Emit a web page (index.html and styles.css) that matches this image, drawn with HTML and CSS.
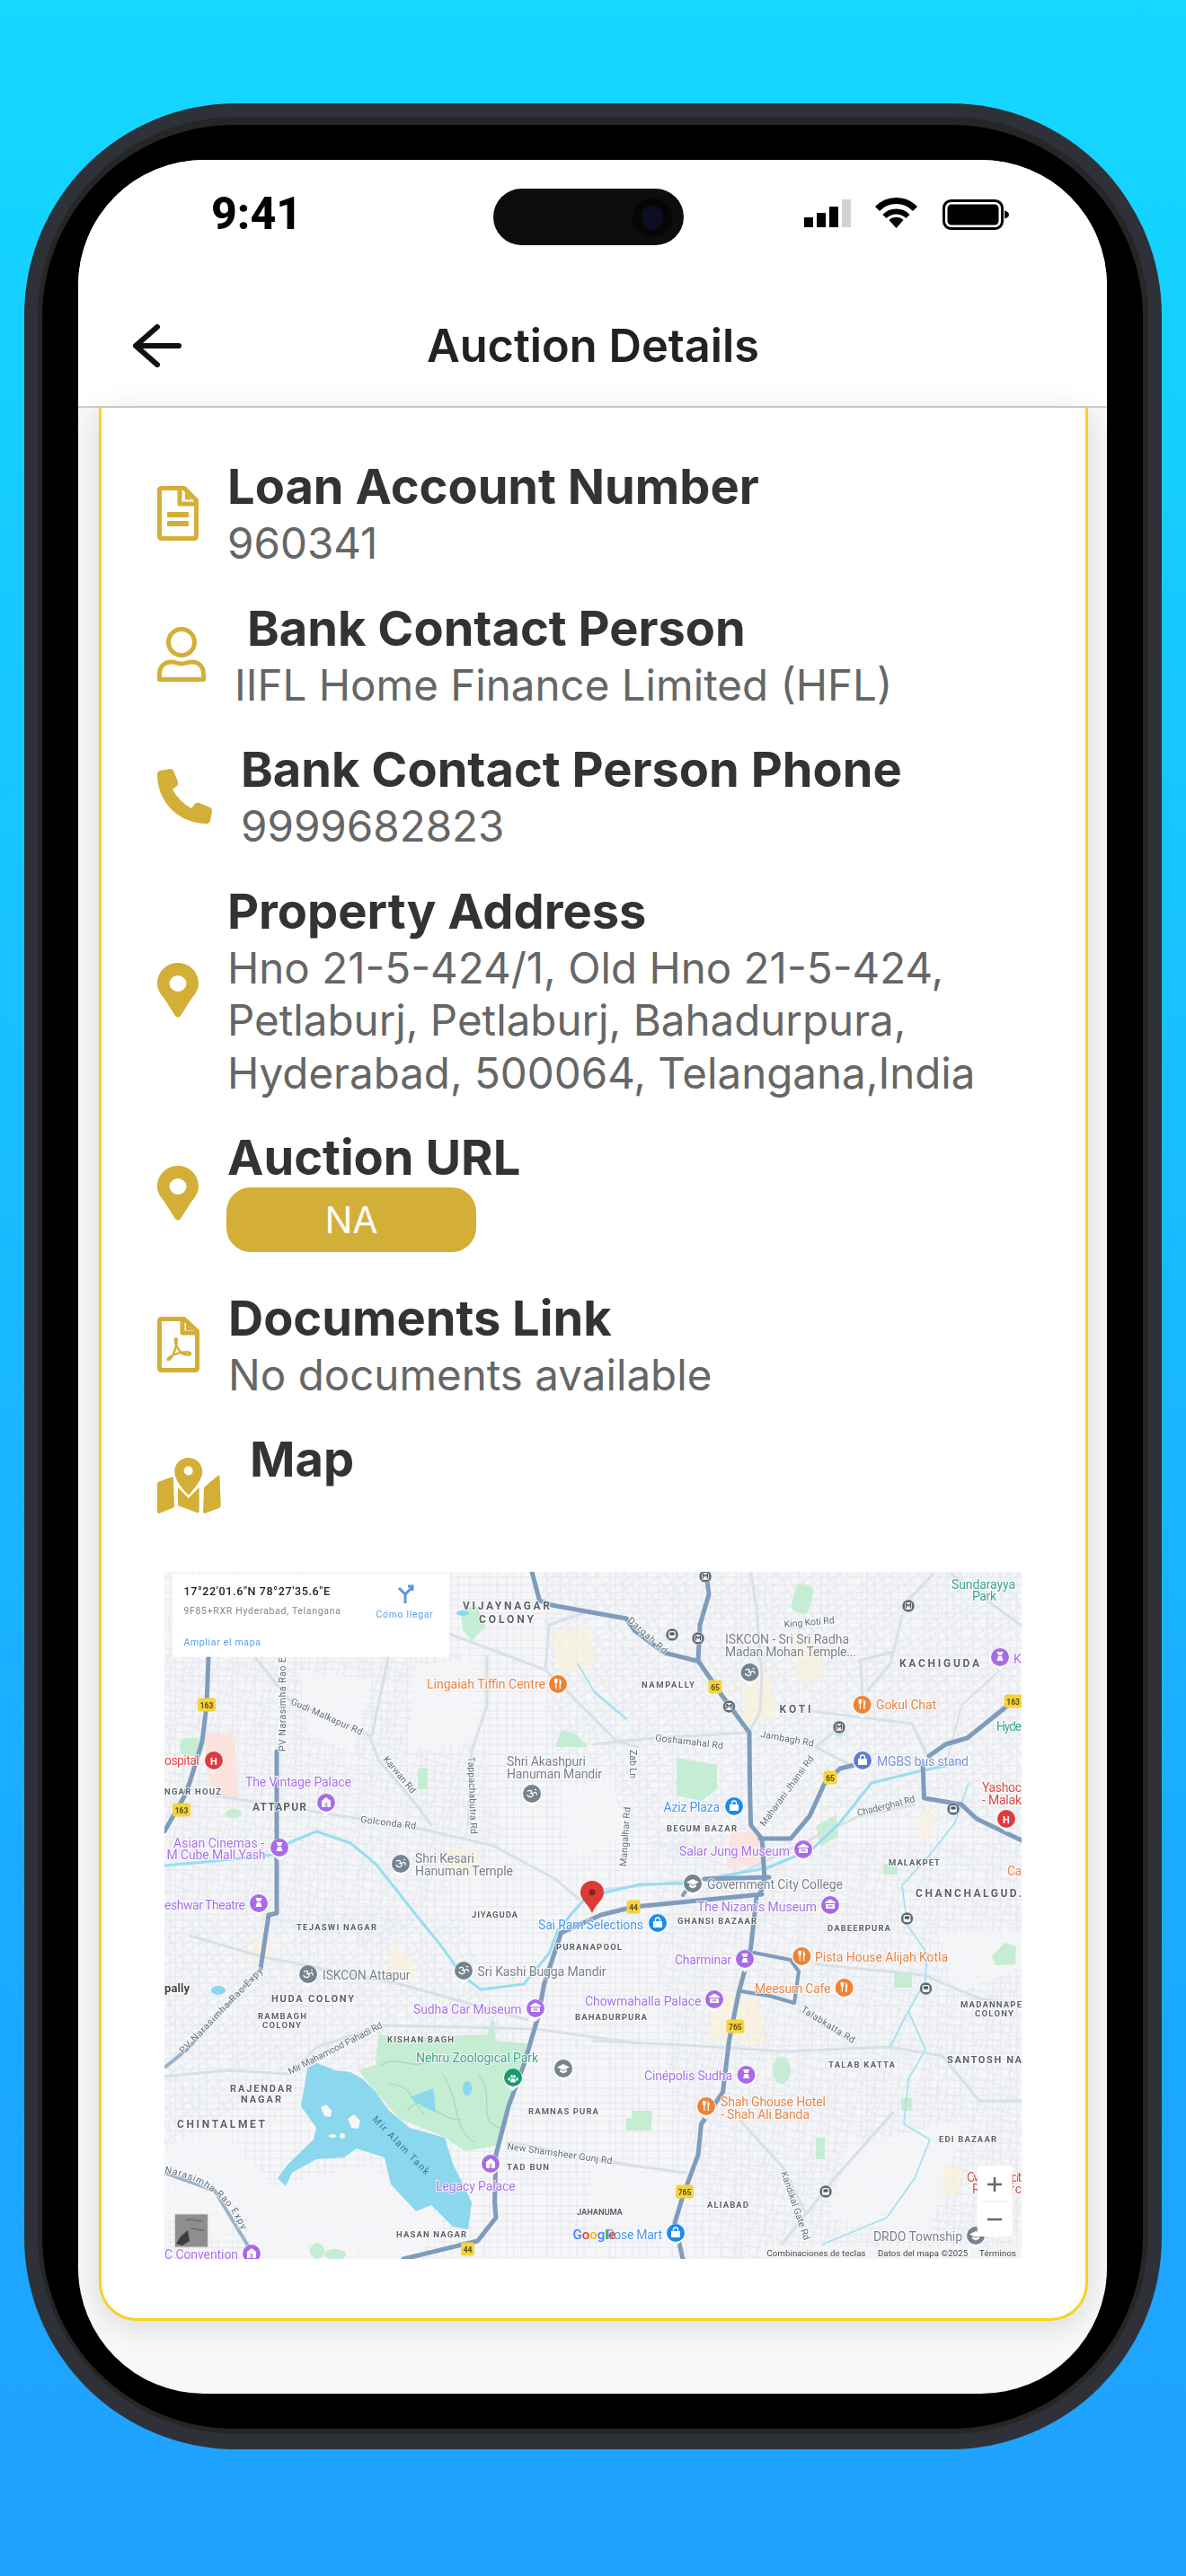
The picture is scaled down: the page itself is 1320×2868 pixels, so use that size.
FILE: index.html
```html
<!DOCTYPE html>
<html lang="en">
<head>
<meta charset="utf-8">
<title>Auction Details</title>
<link rel="stylesheet" href="styles.css">
</head>
<body>
<div class="phone">
  <div class="ring">
    <div class="bezel">
      <div class="screen">
        <div class="status">
          <span class="time">9:41</span>
          <div class="island"><span class="cam"><span class="lens"></span></span></div>
          <div class="status-icons">
            <div class="signal"><i class="b1"></i><i class="b2"></i><i class="b3"></i><i class="b4"></i></div>
            <svg class="wifi" width="49" height="34" viewBox="0 0 49 34"><path class="wifi-arc a1" d="M3.5 12.5A29 29 0 0 1 45.5 12.5"/><path class="wifi-arc a2" d="M11.5 21A18 18 0 0 1 37.5 21"/><path class="wifi-dot" d="M24.5 34L16.5 25A11.5 11.5 0 0 1 32.5 25Z"/></svg>
            <svg class="battery" width="74" height="34" viewBox="0 0 74 34"><rect class="bat-out" x="1.5" y="1.5" width="65" height="31" rx="8"/><rect class="bat-in" x="5.5" y="5.5" width="57" height="23" rx="4.5"/><path class="bat-in" d="M69 12.5C72 13 74 15 74 17S72 21 69 21.500Z"/></svg>
          </div>
        </div>
        <header class="header">
          <svg class="back" width="54" height="48" viewBox="0 0 54 48"><path d="M27 3L3 24L27 45M3 24H51"/></svg>
          <h1 class="title">Auction Details</h1>
          <span></span>
        </header>
        <main class="card">
          <div class="row">
            <svg class="icon" width="46" height="61" viewBox="0 0 46 61"><path class="ln" d="M2.500 5Q2.500 2.500 5 2.500H30L43.500 16V56Q43.500 58.500 41 58.500H5Q2.500 58.500 2.500 56Z"/><path class="ln" d="M25 2.500V20H43.500"/><path class="fl" d="M31 7L39 15.500H31Z"/><rect class="fl" x="11" y="29" width="24" height="6" rx="1"/><rect class="fl" x="11" y="39" width="24" height="6" rx="1"/></svg>
            <div class="text"><h2 class="label">Loan Account Number</h2><p class="value">960341</p></div>
          </div>
          <div class="row">
            <svg class="icon" width="54" height="61" viewBox="0 0 54 61"><circle class="ln" cx="27" cy="17" r="14.500"/><path class="ln" d="M2.500 58.500H51.500V53C51.500 44 46 39 38 39C33 39 32 41 27 41C22 41 21 39 16 39C8 39 2.500 44 2.500 53Z"/></svg>
            <div class="text"><h2 class="label shift">Bank Contact Person</h2><p class="value">IIFL Home Finance Limited (HFL)</p></div>
          </div>
          <div class="row">
            <svg class="icon" width="61" height="61" viewBox="0 0 61 61"><path class="fl" d="M0 6Q0 3 3 2L14 0Q17 0 18 2L23 14Q24 17 22 19L17 23Q24 36 38 44L42 39Q44 37 47 38L59 43Q61 44 61 47L59 58Q58 61 55 61C24 61 0 37 0 6Z"/></svg>
            <div class="text"><h2 class="label">Bank Contact Person Phone</h2><p class="value">9999682823</p></div>
          </div>
          <div class="row">
            <svg class="icon" width="46" height="61" viewBox="0 0 46 61"><path class="fl hole" d="M23 0C36 0 46 10 46 23C46 30 42 35 38 40L26 59Q23 62 20 59L8 40C4 35 0 30 0 23C0 10 10 0 23 0ZM23 14A9.500 9 0 1 0 23 32A9.500 9 0 1 0 23 14Z"/></svg>
            <div class="text"><h2 class="label">Property Address</h2><p class="value">Hno 21-5-424/1, Old Hno 21-5-424, Petlaburj, Petlaburj, Bahadurpura, Hyderabad, 500064, Telangana,India</p></div>
          </div>
          <div class="row row-url">
            <svg class="icon" width="46" height="61" viewBox="0 0 46 61"><path class="fl hole" d="M23 0C36 0 46 10 46 23C46 30 42 35 38 40L26 59Q23 62 20 59L8 40C4 35 0 30 0 23C0 10 10 0 23 0ZM23 14A9.500 9 0 1 0 23 32A9.500 9 0 1 0 23 14Z"/></svg>
            <div class="text"><h2 class="label">Auction URL</h2><div class="pill">NA</div></div>
          </div>
          <div class="row">
            <svg class="icon" width="47" height="62" viewBox="0 0 47 62"><path class="ln" d="M2.500 5Q2.500 2.500 5 2.500H30L44.500 16V57Q44.500 59.500 42 59.500H5Q2.500 59.500 2.500 57Z"/><path class="ln" d="M28 2.500V18H44.500"/><path class="fl" d="M32 7L40 15H32Z"/><path class="thin" d="M12 48C16 48 20 38 21.500 30C22.500 24 21 23 20 25C19 29 23 37 28 41C31 42 37 44 37 41C37 38 25 39 17 43C13 45 11 47 12 48Z"/></svg>
            <div class="text"><h2 class="label">Documents Link</h2><p class="value">No documents available</p></div>
          </div>
          <div class="row row-map">
            <svg class="icon" width="71" height="62" viewBox="0 0 71 62"><path class="fl" d="M1 27L16 21.500Q18 21 18 23L19 54Q19 55 17 56L2 62Q0 62 0 60V29Q0 28 1 27ZM23 33L34.700 45L46.700 33V60Q46.700 62 44 61L25 54Q23 53.500 23 52ZM52 33L68 19.500Q69.500 19 69.500 21L70.700 53Q70.700 55 69 56L53 62Q51 62 51 60Z"/><path class="fl hole" d="M34.700 0C43.500 0 50.200 7 50.200 15.500C50.200 24 42 34 34.700 41.700C27.400 34 19.200 24 19.200 15.500C19.200 7 26 0 34.700 0ZM34.700 9.500A5 5 0 1 0 34.700 19.500A5 5 0 1 0 34.700 9.500Z"/></svg>
            <div class="text"><h2 class="label">Map</h2><p class="value">&nbsp;</p></div>
          </div>
          <svg class="map" width="954" height="765" viewBox="0 0 954 765" role="img" aria-label="Map of Hyderabad">
            <defs>
              <pattern id="s1" width="70" height="70" patternUnits="userSpaceOnUse"><path class="grid" d="M0 6H70M0 15H70M0 23H70M0 31H70M0 38H70M0 46H70M0 52H70M0 63H70M6 0V70M12 0V70M21 0V70M31 0V70M39 0V70M47 0V70M60 0V70M20 9V23M38 23V38M53 38V52M5 52V63"/></pattern>
              <pattern id="s2" width="46" height="46" patternUnits="userSpaceOnUse" patternTransform="rotate(18)"><path class="grid" d="M0 7H46M0 16H46M0 26H46M0 36H46M9 0V46M15 0V46M20 0V46M33 0V46M41 0V46"/></pattern>
              <pattern id="s3" width="38" height="38" patternUnits="userSpaceOnUse" patternTransform="rotate(-32)"><path class="grid" d="M0 6H38M0 13H38M0 21H38M0 30H38M7 0V38M16 0V38M27 0V38"/></pattern>
              <g id="pinbase"><path class="pin-w" d="M-11 0A11 11 0 0 1 11 0C11 7 4 9 0 14C-4 9 -11 7 -11 0Z"/><circle class="pin-c" cy="-1" r="10"/></g>
              <g id="food"><path class="gl" d="M-4 -6V-3Q-4 -1 -2.800 -1V5H-1.600V-1Q-.4 -1 -.4 -3V-6ZM1.500 -6Q4.500 -4 3.500 0H3V5H1.500Z"/></g>
              <g id="museum"><path class="gl" d="M0 -6.500L6 -3V-2H-6V-3ZM-5 -1H5V4H-5Z"/><rect class="gl-i" x="-2.500" y="0" width="5" height="2.500"/></g>
              <g id="cinema"><path class="gl" d="M-3.500 -6H3.500L2 -2H-2ZM-2 -1H2L3.500 4H-3.500Z"/></g>
              <g id="house"><path class="gl" d="M0 -6L5 -2V5H-5V-2Z"/><rect class="gl-i" x="-1.500" y="0" width="3" height="5"/></g>
              <g id="om"><path class="gl-s" d="M-5 -2.500C-2 -5 1 -3 -1 -.5C2 -1 2 4 -2 3.500C-4 3.200 -5 2 -5 1M1 0C3 -3 6 -1 5 1.500M3 -5L5 -4"/></g>
              <g id="cap"><path class="gl" d="M0 -5L7 -1.500L0 2L-7 -1.500ZM-4 1L0 3L4 1V3.500L0 5.500L-4 3.500Z"/></g>
              <g id="bag"><path class="gl" d="M-5 -2H5V5H-5Z"/><path class="gl-s" d="M-2.500 -2V-3.500A2.500 2.500 0 0 1 2.500 -3.500V-2"/></g>
              <g id="metro"><circle class="m-o" r="7"/><rect class="m-i" x="-4" y="-4" width="8" height="8" rx="2"/><path class="m-d" d="M-2.500 2.500V-2.500L0 0L2.500 -2.500V2.500"/></g>
              <g id="rail"><circle class="m-o" r="7"/><rect class="m-i" x="-4" y="-4" width="8" height="8" rx="2"/><rect class="m-d2" x="-2.500" y="-2.500" width="5" height="3"/></g>
            </defs>

            <rect class="land" width="954" height="765"/>
            <rect width="954" height="765" fill="url(#s1)"/>
            <path fill="url(#s2)" d="M0 90H330L380 300L240 420L0 360Z"/>
            <path fill="url(#s3)" d="M420 0H954V300L760 260L560 320L430 200Z"/>
            <path fill="url(#s2)" d="M540 300H954V765H620L560 560Z"/>
            <path fill="url(#s3)" d="M0 380H330L380 520L130 570L0 640Z"/>
            <path class="open" d="M90 690L230 660L310 720L280 765H100Z"/>
            <path class="open" d="M760 640L890 610L850 740L740 720Z"/>
            <path class="open" d="M480 650L590 680L560 750L470 720Z"/>
            <path class="open" d="M440 240L500 230L510 300L450 320Z"/>
            <path class="open" d="M280 105L340 95L350 190L270 200Z"/>
            <path class="open" d="M860 400H954V440L880 470Z"/>
            <path class="open" d="M0 640L60 620L130 690L60 740L0 720Z"/>
            <path class="open" d="M150 110L230 120L210 200L160 180Z"/>

            <path class="beige" d="M430 68L470 60L480 105L440 115Z"/>
            <path class="beige" d="M700 70L725 75L735 115L705 125Z"/>
            <path class="beige" d="M645 115L675 115L680 165L645 170Z"/>
            <path class="beige" d="M610 470L660 475L670 525L605 520Z"/>
            <path class="beige" d="M255 415L275 430L280 455L245 450Z"/>
            <path class="beige" d="M100 410L122 412L118 435L95 432Z"/>
            <path class="beige" d="M318 305L350 312L345 340L310 332Z"/>
            <path class="beige" d="M840 265L858 268L853 298L838 293Z"/>
            <path class="beige" d="M868 660L888 663L884 695L864 692Z"/>
            <path class="pink" d="M44 185Q44 180 50 180H78L82 252H52Z"/>
            <path class="pink" d="M630 290L660 290L665 325L625 330Z"/>

            <path class="park" d="M570 207L615 215V242L597.500 255L570 249Z"/>
            <path class="park" d="M216 555L235 549L238 515L273 519L359 515L366 495L369 522L404 525L388 582L369 639L335 645L311 629L262 609L235 579Z"/>
            <path class="zoo" d="M240 550C260 535 280 560 300 540M300 540C320 555 350 540 380 545M270 600C290 575 300 610 330 610M310 560C330 590 320 620 345 635M350 560C370 590 345 610 375 620M250 570C275 570 275 590 290 605"/>
            <path class="park" d="M435 195L442 176L457 180L472 195Z"/>
            <path class="park" d="M282 219H293V242H282Z"/>
            <path class="park" d="M330 43L347 37L358 60L342 77L332 65Z"/>
            <path class="park" d="M921 428L935 413L948 417L947 437L925 438Z"/>
            <path class="park" d="M725 283L748 270L750 295L730 305Z"/>
            <ellipse class="park" cx="687" cy="555" rx="10" ry="15"/>
            <ellipse class="park" cx="751" cy="176" rx="6" ry="8"/>
            <ellipse class="park" cx="77" cy="269" rx="9" ry="5"/>
            <ellipse class="park" cx="170" cy="756" rx="8" ry="9"/>
            <ellipse class="park" cx="190" cy="760" rx="12" ry="6"/>
            <rect class="park" x="17" y="185" width="26" height="20" rx="8"/>
            <rect class="park" x="514" y="608" width="11" height="14"/>
            <rect class="park" x="800" y="325" width="16" height="12"/>
            <rect class="park" x="812" y="445" width="20" height="18"/>
            <rect class="park" x="820" y="586" width="12" height="14"/>
            <rect class="park" x="725" y="630" width="10" height="24"/>
            <rect class="park" x="520" y="600" width="22" height="22"/>
            <rect class="park" x="700" y="14" width="20" height="32" rx="6" transform="rotate(15 710 30)"/>

            <path class="water" d="M159 552L170 547L190 555L207 557L221 565L235 579L249 599L273 619L312 630L321 659L342 702L338 732L321 729L297 705L280 712L252 682L245 652L214 642L200 652L169 654L142 669L135 684L126 675L138 659L166 632L169 619L152 595L156 572Z"/>
            <path class="land" d="M174 596L180 593L186 600L185 607L178 606Z"/>
            <path class="land" d="M204 609L211 604L218 611L216 620L208 619Z"/>
            <ellipse class="land" cx="187" cy="628" rx="4" ry="2"/>
            <ellipse class="land" cx="198" cy="628" rx="3" ry="3"/>
            <path class="water" d="M273 585L299 575L302 602L287 595Z"/>
            <ellipse class="water" cx="337" cy="575" rx="5" ry="8"/>
            <ellipse class="water" cx="60" cy="466" rx="8" ry="5"/>
            <ellipse class="water" cx="332" cy="46" rx="7" ry="3"/>

            <path class="minor" d="M56 249L180 269L280 285L366 305L435 342L462 365"/>
            <path class="minor" d="M101 95L138 142L228 182L238 209L280 259L297 282"/>
            <path class="minor" d="M317 69L424 109L504 189L527 195"/>
            <path class="minor" d="M424 109L428 59L469 45"/>
            <path class="minor" d="M249 95L231 182"/>
            <path class="minor" d="M359 95L359 149L342 199L338 282"/>
            <path class="minor" d="M653 2L659 42L665 115L663 155L651 179"/>
            <path class="minor" d="M821 49L808 102L783 132"/>
            <path class="minor" d="M856 2L821 39"/>
            <path class="minor" d="M773 99L811 89"/>
            <path class="minor" d="M775 99L777 140"/>
            <path class="minor" d="M720 155L832 169L849 205"/>
            <path class="minor" d="M751 174L725 195L763 215"/>
            <path class="minor" d="M477 192L546 185L649 179"/>
            <path class="minor thin" d="M870 215L887 149L938 102"/>
            <path class="minor" d="M0 562L70 555L138 559"/>
            <path class="minor" d="M140 559L170 529L243 505L414 509L527 525"/>
            <path class="minor" d="M28 405L111 429L262 459L404 499"/>
            <path class="minor" d="M477 522L580 527L690 534L807 529L866 539L907 589L954 589"/>
            <path class="minor" d="M725 437L845 449L907 475L954 482"/>
            <path class="minor" d="M642 612L690 665L714 715"/>
            <path class="minor" d="M811 602L746 675L687 749"/>
            <path class="minor" d="M477 655L580 669"/>
            <path class="minor" d="M383 635L527 662"/>
            <path class="minor" d="M708 489L766 524"/>
            <path class="minor" d="M604 353L773 272L835 259"/>
            <path class="minor" d="M477 355L600 342"/>
            <path class="minor" d="M875 2L954 60"/>
            <path class="mid" d="M107 442L25 532L0 552"/>
            <path class="mid" d="M0 669L56 689L94 752"/>

            <path class="river" d="M0 327L56 322L121 315L138 302L169 289L207 302L235 325L262 359L280 382L307 415L331 449L352 465L400 459L428 425L438 399L452 382L470 362L529 348L580 347M601 342L670 330L721 309L752 279L787 235L840 222L890 212"/>
            <path class="rivlet" d="M895 235L880 279L852 315L821 349L825 380L826 392L849 425L847 455L828 489L807.600 529M828 489L847 532L828 565L823 615L852 632L835 675L804 719L732 749"/>
            <path class="rivlet" d="M460 102L479 135L514 164M477 132L515 164"/>

            <path class="major" d="M49 95L47 148L42 189L28 235L21 252L0 289"/>
            <path class="major" d="M125 200L125 380L116 382L107 442"/>
            <path class="major" d="M409 0L417.500 32L431 37L469 44L514 52L523 65L556 90L592 99"/>
            <path class="major" d="M603 2L606 25L596 59L594 99L620 137L651 179L651.600 242L652.600 282L665 297L668 342L663 359"/>
            <path class="major" d="M663 297L697 297L718 272L735 235L752 219L780 212"/>
            <path class="major" d="M844 212L845.500 252L887 259L904 275L954 299"/>
            <path class="major" d="M851 205L869.600 192L893.600 185L938.400 149"/>
            <path class="major" d="M601 342L673 340"/>
            <path class="major" d="M441.500 402L486 382L522 373L665 359"/>
            <path class="major" d="M659 362L652.600 419L639 469L628.500 522L621.600 579L597.500 615L594 649L577 695L568 725L577 765"/>
            <path class="major" d="M441.500 402L422.600 459L416 495L400 549L383 595L369 649L367.500 702L369 719L348.600 745L266 765"/>
            <path class="major nar" d="M656 424L697 432L706 445L701 480L673 472L642 467"/>
            <path class="major nar" d="M577 360L588 345"/>

            <g class="road">
              <text transform="translate(140 147) rotate(24)" textLength="86">Gudi Malkapur Rd</text>
              <text transform="translate(135 200) rotate(-90)" textLength="105">PV Narasimha Rao E</text>
              <text transform="translate(218 279) rotate(7)" textLength="62">Golconda Rd</text>
              <text transform="translate(243 209) rotate(50)" textLength="50">Karwan Rd</text>
              <text transform="translate(338 206) rotate(88)" textLength="86">Tappachabutra Rd</text>
              <text transform="translate(518 198) rotate(90)" textLength="32">Zab Ln</text>
              <text transform="translate(514 328) rotate(-86)" textLength="66">Mangalhar Rd</text>
              <text transform="translate(690 62) rotate(-5)" textLength="56">King Koti Rd</text>
              <text transform="translate(515 55) rotate(42)" textLength="55">Dargah Rd</text>
              <text transform="translate(546 188) rotate(7)" textLength="76">Goshamahal Rd</text>
              <text transform="translate(663 184) rotate(10)" textLength="60">Jambagh Rd</text>
              <text transform="translate(668 284) rotate(-54)" textLength="94">Maharani Jhansi Rd</text>
              <text transform="translate(772 272) rotate(-14)" textLength="66">Chaderghat Rd</text>
              <text transform="translate(21 537) rotate(-46)" textLength="128">PV Narasimha Rao Expy</text>
              <text transform="translate(140 560) rotate(-27)" textLength="116">Mir Mahamood Pahadi Rd</text>
              <text transform="translate(381 643) rotate(8)" textLength="118">New Shamsheer Gunj Rd</text>
              <text transform="translate(708 489) rotate(32)" textLength="68">Talabkatta Rd</text>
              <text transform="translate(686 669) rotate(71)" textLength="80">Kandikal Gate Rd</text>
              <text class="tank" transform="translate(231 610) rotate(46)" textLength="86">Mir Alam Tank</text>
              <text><textPath href="#expy" textLength="112">Narasimha Rao Expy</textPath></text>
              <path id="expy" class="none" d="M0 669C40 676 72 695 88 738"/>
            </g>

            <g class="hood">
              <text class="h12" x="332" y="42" textLength="97">VIJAYNAGAR</text>
              <text class="h12" x="350" y="57" textLength="61">COLONY</text>
              <text x="0" y="248" textLength="63">NGAR HOUZ</text>
              <text class="h12" x="98" y="266" textLength="60">ATTAPUR</text>
              <text class="h12" x="818" y="106" textLength="89">KACHIGUDA</text>
              <text x="531" y="129" textLength="59">NAMPALLY</text>
              <text class="h12" x="684.600" y="157" textLength="35">KOTI</text>
              <text x="559" y="289" textLength="78">BEGUM BAZAR</text>
              <text x="806" y="327" textLength="57">MALAKPET</text>
              <text class="h12" x="836" y="362" textLength="118">CHANCHALGUD.</text>
              <text x="342" y="385" textLength="51">JIYAGUDA</text>
              <text x="147" y="399" textLength="89">TEJASWI NAGAR</text>
              <text x="436" y="421" textLength="73">PURANAPOOL</text>
              <text class="h11" x="119" y="479" textLength="92">HUDA COLONY</text>
              <text x="104" y="498" textLength="54">RAMBAGH</text>
              <text x="109" y="508" textLength="43">COLONY</text>
              <text x="457" y="499" textLength="80">BAHADURPURA</text>
              <text x="248" y="524" textLength="74">KISHAN BAGH</text>
              <text class="h11" x="73" y="579" textLength="69">RAJENDAR</text>
              <text class="h11" x="85" y="591" textLength="45">NAGAR</text>
              <text class="h12" x="14" y="619" textLength="98">CHINTALMET</text>
              <text x="405" y="604" textLength="78">RAMNAS PURA</text>
              <text x="381" y="666" textLength="47">TAD BUN</text>
              <text x="459" y="716" textLength="51">JAHANUMA</text>
              <text x="258" y="741" textLength="78">HASAN NAGAR</text>
              <text x="571" y="392" textLength="88">GHANSI BAZAAR</text>
              <text x="738" y="400" textLength="70">DABEERPURA</text>
              <text x="886" y="485" textLength="68">MADANNAPE</text>
              <text x="902" y="495" textLength="43">COLONY</text>
              <text x="739" y="552" textLength="74">TALAB KATTA</text>
              <text class="h11" x="871" y="547" textLength="83">SANTOSH NA</text>
              <text x="862" y="635" textLength="64">EDI BAZAAR</text>
              <text x="604" y="708" textLength="46">ALIABAD</text>
              <text class="pally" x="0" y="468" textLength="28">pally</text>
            </g>

            <g class="poi">
              <text class="orange" x="292" y="130" textLength="132">Lingaiah Tiffin Centre</text>
              <text class="red" x="0" y="215" textLength="38.600">ospital</text>
              <text class="purple" x="90" y="239" textLength="118">The Vintage Palace</text>
              <text class="gray" x="381" y="216" textLength="88">Shri Akashpuri</text>
              <text class="gray" x="381" y="230" textLength="106">Hanuman Mandir</text>
              <text class="purple" x="10" y="307" textLength="101">Asian Cinemas -</text>
              <text class="purple" x="2.500" y="320" textLength="110">M Cube Mall Yash</text>
              <text class="gray" x="279" y="324" textLength="66">Shri Kesari</text>
              <text class="gray" x="279" y="338" textLength="109">Hanuman Temple</text>
              <text class="purple" x="0" y="376" textLength="90">eshwar Theatre</text>
              <text class="green" x="876" y="19" textLength="71">Sundarayya</text>
              <text class="green" x="899" y="32" textLength="27">Park</text>
              <text class="gray" x="624" y="80" textLength="138">ISKCON - Sri Sri Radha</text>
              <text class="gray" x="624" y="94" textLength="146">Madan Mohan Temple...</text>
              <text class="purple" x="945" y="102" textLength="9">K</text>
              <text class="orange" x="792" y="153" textLength="67">Gokul Chat</text>
              <text class="indigo" x="793" y="216" textLength="102">MGBS bus stand</text>
              <text class="green" x="926" y="177" textLength="28">Hyde</text>
              <text class="red" x="910" y="245" textLength="44">Yashoc</text>
              <text class="red" x="910" y="259" textLength="44">- Malak</text>
              <text class="blue" x="555.500" y="267" textLength="62.500">Aziz Plaza</text>
              <text class="purple" x="573" y="316" textLength="123">Salar Jung Museum</text>
              <text class="orange" x="938" y="338" textLength="16">Ca</text>
              <text class="gray" x="604" y="353" textLength="151">Government City College</text>
              <text class="purple" x="593" y="378" textLength="133">The Nizam's Museum</text>
              <text class="blue" x="416" y="398" textLength="117">Sai Ram Selections</text>
              <text class="gray" x="176" y="454" textLength="97.500">ISKCON Attapur</text>
              <text class="gray" x="348.600" y="450" textLength="143">Sri Kashi Bugga Mandir</text>
              <text class="purple" x="277" y="492" textLength="120.500">Sudha Car Museum</text>
              <text class="purple" x="468" y="483" textLength="129.500">Chowmahalla Palace</text>
              <text class="green" x="280" y="546" textLength="136">Nehru Zoological Park</text>
              <text class="purple" x="302" y="689" textLength="88.600">Legacy Palace</text>
              <text class="purple" x="0" y="765" textLength="82">C Convention</text>
              <text class="blue" x="492" y="743" textLength="62">Rose Mart</text>
              <text class="purple" x="568" y="437" textLength="63">Charminar</text>
              <text class="orange" x="724" y="434" textLength="148">Pista House Alijah Kotla</text>
              <text class="orange" x="657" y="469" textLength="84.500">Meesum Cafe</text>
              <text class="purple" x="534" y="566" textLength="98">Cinépolis Sudha</text>
              <text class="orange" x="619" y="595" textLength="117">Shah Ghouse Hotel</text>
              <text class="orange" x="619" y="609" textLength="99">- Shah Ali Banda</text>
              <text class="gray" x="789" y="745" textLength="99">DRDO Township</text>
              <text class="red" x="893" y="679" textLength="61">Owaisi Hospit</text>
              <text class="red" x="899" y="692" textLength="55">Researc</text>
            </g>

            <text class="glogo" x="454.600" y="743"><tspan class="g-b">G</tspan><tspan class="g-r">o</tspan><tspan class="g-y">o</tspan><tspan class="g-b">g</tspan><tspan class="g-g">l</tspan><tspan class="g-r">e</tspan></text>

            <g class="shield">
              <g transform="translate(47 148)"><rect x="-10" y="-7.500" width="20" height="15" rx="3"/><text y="3.500">163</text></g>
              <g transform="translate(19 265)"><rect x="-10" y="-7.500" width="20" height="15" rx="3"/><text y="3.500">163</text></g>
              <g transform="translate(613 128)"><rect x="-7.500" y="-7.500" width="15" height="15" rx="3"/><text y="3.500">65</text></g>
              <g transform="translate(741 229)"><rect x="-7.500" y="-7.500" width="15" height="15" rx="3"/><text y="3.500">65</text></g>
              <g transform="translate(944.600 144)"><rect x="-10" y="-7.500" width="20" height="15" rx="3"/><text y="3.500">163</text></g>
              <g transform="translate(522 373)"><rect x="-7.500" y="-7.500" width="15" height="15" rx="3"/><text y="3.500">44</text></g>
              <g transform="translate(337.500 754)"><rect x="-7.500" y="-7.500" width="15" height="15" rx="3"/><text y="3.500">44</text></g>
              <g transform="translate(635.400 506)"><rect x="-10" y="-7.500" width="20" height="15" rx="3"/><text y="3.500">765</text></g>
              <g transform="translate(579 690)"><rect x="-10" y="-7.500" width="20" height="15" rx="3"/><text y="3.500">765</text></g>
            </g>

            <use href="#rail" x="565" y="70"/><use href="#metro" x="594" y="74"/><use href="#metro" x="628.500" y="150"/><use href="#metro" x="751" y="173"/><use href="#metro" x="828" y="38"/><use href="#metro" x="602" y="5"/><use href="#rail" x="878" y="264"/><use href="#rail" x="826.500" y="386"/><use href="#rail" x="847.500" y="464"/><use href="#rail" x="736" y="690"/>

            <g class="pin c-orange" transform="translate(438 126)"><use href="#pinbase"/><use href="#food" y="-1"/></g>
            <g class="pin c-red" transform="translate(55 211)"><use href="#pinbase"/><text class="pin-t" y="3.500">H</text></g>
            <g class="pin c-purple" transform="translate(180 258)"><use href="#pinbase"/><use href="#house" y="-1"/></g>
            <g class="pin c-gray" transform="translate(409 248)"><use href="#pinbase"/><use href="#om" y="-1"/></g>
            <g class="pin c-purple" transform="translate(128 308)"><use href="#pinbase"/><use href="#cinema" y="-1"/></g>
            <g class="pin c-gray" transform="translate(263 326)"><use href="#pinbase"/><use href="#om" y="-1"/></g>
            <g class="pin c-purple" transform="translate(105 370)"><use href="#pinbase"/><use href="#cinema" y="-1"/></g>
            <g class="pin c-gray" transform="translate(651.600 113)"><use href="#pinbase"/><use href="#om" y="-1"/></g>
            <g class="pin c-purple" transform="translate(930 96)"><use href="#pinbase"/><use href="#cinema" y="-1"/></g>
            <g class="pin c-orange" transform="translate(776.600 149)"><use href="#pinbase"/><use href="#food" y="-1"/></g>
            <g class="pin c-indigo" transform="translate(777 211)"><use href="#pinbase"/><use href="#bag" y="-1"/></g>
            <g class="pin c-red" transform="translate(937 276)"><use href="#pinbase"/><text class="pin-t" y="3.500">H</text></g>
            <g class="pin c-blue" transform="translate(634 262)"><use href="#pinbase"/><use href="#bag" y="-1"/></g>
            <g class="pin c-purple" transform="translate(711 310)"><use href="#pinbase"/><use href="#museum" y="-1"/></g>
            <g class="pin c-gray" transform="translate(588 348)"><use href="#pinbase"/><use href="#cap" y="-1"/></g>
            <g class="pin c-purple" transform="translate(741 372)"><use href="#pinbase"/><use href="#museum" y="-1"/></g>
            <g class="pin c-blue" transform="translate(549 392)"><use href="#pinbase"/><use href="#bag" y="-1"/></g>
            <g class="pin c-gray" transform="translate(160 449)"><use href="#pinbase"/><use href="#om" y="-1"/></g>
            <g class="pin c-gray" transform="translate(333 445)"><use href="#pinbase"/><use href="#om" y="-1"/></g>
            <g class="pin c-purple" transform="translate(413 487)"><use href="#pinbase"/><use href="#museum" y="-1"/></g>
            <g class="pin c-purple" transform="translate(612 477)"><use href="#pinbase"/><use href="#museum" y="-1"/></g>
            <g class="pin c-teal" transform="translate(388 564)"><use href="#pinbase"/><path class="gl" d="M-4.500 -1A1.300 1.800 0 1 0 -4.400 -1ZM-1.500 -4A1.300 1.800 0 1 0 -1.400 -4ZM1.500 -4A1.300 1.800 0 1 0 1.600 -4ZM4.500 -1A1.300 1.800 0 1 0 4.600 -1ZM0 0C3 0 4 4 2 4.500H-2C-4 4 -3 0 0 0Z"/></g>
            <g class="pin c-gray" transform="translate(444 554)"><use href="#pinbase"/><use href="#cap" y="-1"/></g>
            <g class="pin c-purple" transform="translate(363 660)"><use href="#pinbase"/><use href="#house" y="-1"/></g>
            <g class="pin c-purple" transform="translate(97 760)"><use href="#pinbase"/><use href="#house" y="-1"/></g>
            <g class="pin c-blue" transform="translate(569 737)"><use href="#pinbase"/><use href="#bag" y="-1"/></g>
            <g class="pin c-purple" transform="translate(646 432)"><use href="#pinbase"/><use href="#cinema" y="-1"/></g>
            <g class="pin c-orange" transform="translate(709.400 429)"><use href="#pinbase"/><use href="#food" y="-1"/></g>
            <g class="pin c-orange" transform="translate(756.600 464)"><use href="#pinbase"/><use href="#food" y="-1"/></g>
            <g class="pin c-purple" transform="translate(647.500 561)"><use href="#pinbase"/><use href="#cinema" y="-1"/></g>
            <g class="pin c-orange" transform="translate(603 596)"><use href="#pinbase"/><use href="#food" y="-1"/></g>
            <g class="pin c-gray" transform="translate(903 740)"><use href="#pinbase"/><use href="#cap" y="-1"/></g>

            <path class="marker" d="M476 380C472 370 463 365 463 357A13 13 0 0 1 489 357C489 365 480 370 476 380Z"/>
            <circle class="marker-dot" cx="476" cy="357" r="3.500"/>

            <rect class="panel" x="9.400" y="2.700" width="308" height="92"/>
            <text class="p-coord" x="21.400" y="26" textLength="162.600">17°22'01.6"N 78°27'35.6"E</text>
            <text class="p-addr" x="21.400" y="47" textLength="174.600">9F85+RXR Hyderabad, Telangana</text>
            <text class="p-link" x="21.400" y="82" textLength="85.600">Ampliar el mapa</text>
            <text class="p-link" x="235.600" y="51" textLength="63">Cómo llegar</text>
            <path class="p-fork" d="M268 35V25L261 18M268 25L275 18M271 16H276V21"/>

            <g class="zoomctl">
              <rect x="904.700" y="661" width="39" height="79" class="zoom-bg"/>
              <path class="zoom-sep" d="M910 701H938"/>
              <path class="zoom-ic" d="M924 674V690M916 682H932M916 721H932"/>
            </g>

            <rect class="sat-f" x="10.500" y="714" width="39" height="39"/>
            <rect class="sat" x="12" y="715.500" width="36" height="36"/>
            <path class="sat-d" d="M18 740L26 733L28 745L20 750L13 748Z"/>
            <path class="sat-l" d="M24 722C32 719 40 725 42 722M30 732C35 729 38 735 44 733"/>

            <rect class="foot" x="665" y="751" width="289" height="14"/>
            <g class="foot-t">
              <text x="670.500" y="762" textLength="110">Combinaciones de teclas</text>
              <text x="794" y="762" textLength="100">Datos del mapa ©2025</text>
              <text x="907" y="762" textLength="41">Términos</text>
            </g>
          </svg>
        </main>
      </div>
    </div>
  </div>
</div>
</body>
</html>
```

FILE: styles.css
```css
* { box-sizing: border-box; margin: 0; padding: 0; }
html, body { height: 2868px; overflow: hidden; }
body {
  background: linear-gradient(180deg, #14d8ff 0%, #1ba8ff 80%, #1fa2ff 100%);
  padding: 115px 27px 141px;
  font-family: Inter, "Liberation Sans", sans-serif;
}
.phone { width: 1266px; height: 2612px; padding: 15px 15px 17px; background: #2f3138; border-radius: 236px; }
.ring { height: 100%; padding: 9px 6px 6px 5px; background: #262626; border-radius: 222px; }
.bezel { height: 100%; padding: 39px 40px; background: #000; border-radius: 214px; }
.screen { height: 100%; background: #f7f8fa; border-radius: 140px; overflow: hidden; }

.status { height: 143px; background: #fff; display: flex; align-items: flex-start; }
.time { margin: 32px 0 0 148px; width: 99px; font: 800 50px/56px Roboto, sans-serif; color: #000; white-space: nowrap; }
.island { margin: 32px 0 0 215px; width: 212px; height: 63px; border-radius: 32px; background: #0d0d0d; display: flex; justify-content: flex-end; align-items: center; padding-right: 13px; }
.cam { width: 44px; height: 44px; border-radius: 50%; background: #060606; display: flex; align-items: center; justify-content: center; }
.lens { width: 24px; height: 28px; border-radius: 50%; background: #0d0d24; }
.status-icons { margin: 42px 0 0 134px; display: flex; align-items: flex-start; }
.signal { width: 52px; height: 31px; margin-top: 2px; display: flex; align-items: flex-end; gap: 4px; }
.signal i { display: block; width: 10px; background: #000; }
.signal .b1 { height: 11px; }
.signal .b2 { height: 16px; }
.signal .b3 { height: 23px; }
.signal .b4 { height: 31px; background: #d3d3d3; }
.wifi { margin-left: 26px; fill: none; }
.wifi-arc { fill: none; stroke: #000; }
.a1 { stroke-width: 7; }
.a2 { stroke-width: 6; }
.wifi-dot { fill: #000; }
.battery { margin: 2px 0 0 27px; }
.bat-out { fill: none; stroke: #000; stroke-width: 3; }
.bat-in { fill: #000; }

.header { height: 133px; background: #fff; border-bottom: 2px solid #cdcdcd; display: grid; grid-template-columns: 1fr auto 1fr; align-items: center; padding: 0 60px 3px 61px; }
.back { fill: none; stroke: #111; stroke-width: 6; stroke-linecap: round; stroke-linejoin: round; }
.back path { fill: none; }
.title { font-size: 50.500px; line-height: 60px; font-weight: 600; color: #222; white-space: nowrap; }

.card { margin: 0 21px 0 23px; height: 2130px; padding: 57px 62px 0; background: #fff; border: 3px solid #f8d21e; border-top: 0; border-radius: 0 0 42px 42px; box-shadow: 0 6px 34px rgba(0, 0, 0, .13); }
.row { display: flex; align-items: center; gap: 32px; margin-bottom: 34px; }
.row-map { margin-bottom: 32px; }
.icon { flex: none; margin-bottom: 3px; }
.fl { fill: #d4af37; }
.hole { fill-rule: evenodd; }
.ln { fill: none; stroke: #d4af37; stroke-width: 5; stroke-linejoin: round; }
.thin { fill: none; stroke: #d4af37; stroke-width: 2.500; stroke-linejoin: round; }
.text { width: 860px; }
.label { font-size: 54.200px; line-height: 60px; font-weight: 700; color: #333; white-space: nowrap; }
.shift { margin-left: 14px; }
.value { font-size: 47.500px; line-height: 58.500px; margin-top: 5px; color: #666; }
.pill { margin: 3.500px 0 9px -1px; width: 278px; height: 72px; border-radius: 27px; background: #d4af37; color: #fff; font-size: 41px; line-height: 72px; text-align: center; }

.map { display: block; margin-left: 8px; filter: blur(.7px); font-family: Roboto, sans-serif; }
.land { fill: #f6f6f8; }
.grid { fill: none; stroke: #e3e8ee; stroke-width: 1; }
.open { fill: #f6f6f8; opacity: .7; }
.beige { fill: #fbf1d6; opacity: .6; }
.pink { fill: #fbe3df; }
.park { fill: #c5edd3; }
.zoo { fill: none; stroke: #9fdcb6; stroke-width: 1.200; }
.water { fill: #8bd7ee; }
.minor { fill: none; stroke: #d8e0e8; stroke-width: 3; stroke-linecap: round; stroke-linejoin: round; }
.minor.thin { stroke-width: 2; stroke: #dcdfe3; }
.mid { fill: none; stroke: #9db2c9; stroke-width: 4; stroke-linejoin: round; }
.river { fill: none; stroke: #96def1; stroke-width: 3; stroke-linejoin: round; }
.rivlet { fill: none; stroke: #a3e1f2; stroke-width: 1.800; stroke-linejoin: round; }
.major { fill: none; stroke: #7f9cbc; stroke-width: 5; stroke-linejoin: round; stroke-linecap: round; }
.major.nar { stroke-width: 4; }
.none { fill: none; stroke: none; }

.road text { font-size: 10.500px; fill: #5f6b76; paint-order: stroke; stroke: rgba(255,255,255,.8); stroke-width: 2px; }
.road .tank { fill: #2b7b8e; stroke: none; }
.hood text { font-size: 9.500px; font-weight: 700; fill: #5e6266; paint-order: stroke; stroke: rgba(255,255,255,.8); stroke-width: 2px; }
.hood .h12 { font-size: 12px; }
.hood .h11 { font-size: 11px; }
.hood .pally { font-size: 13px; fill: #444; }
.poi text { font-size: 14px; paint-order: stroke; stroke: rgba(255,255,255,.8); stroke-width: 2px; }
.poi .orange { fill: #ea8443; }
.poi .red { fill: #dd4b45; }
.poi .purple { fill: #a871ec; }
.poi .gray { fill: #7a8088; }
.poi .green { fill: #3aa58c; }
.poi .indigo { fill: #7d90d8; }
.poi .blue { fill: #4a98ec; }
.glogo { font-size: 15px; font-weight: 500; }
.g-b { fill: #4285f4; }
.g-r { fill: #ea4335; }
.g-y { fill: #fbbc05; }
.g-g { fill: #34a853; }
.shield rect { fill: #f6d33c; }
.shield text { font-size: 8.500px; font-weight: 700; fill: #5b4c16; text-anchor: middle; }

.pin-w { fill: #fff; }
.pin-c { fill: currentColor; }
.c-orange { color: #ee8433; }
.c-red { color: #de3b3e; }
.c-purple { color: #a86be8; }
.c-gray { color: #75838f; }
.c-indigo { color: #5f79d8; }
.c-blue { color: #1e8cea; }
.c-teal { color: #17996f; }
.gl { fill: #fff; }
.gl-i { fill: #a86be8; opacity: .6; }
.gl-s { fill: none; stroke: #fff; stroke-width: 1.300; }
.pin-t { font-size: 11px; font-weight: 700; fill: #fff; text-anchor: middle; }
.m-o { fill: #5e6a76; stroke: #fff; stroke-opacity: .5; }
.m-i { fill: #eef0f2; }
.m-d { fill: none; stroke: #46525e; stroke-width: 1.200; }
.m-d2 { fill: #46525e; }
.marker { fill: #dc3a37; }
.marker-dot { fill: #8b1e1c; }

.panel { fill: #fff; }
.p-coord { font-size: 12.500px; font-weight: 500; fill: #222; }
.p-addr { font-size: 10.500px; fill: #80868b; }
.p-link { font-size: 10.500px; fill: #5a9cec; }
.p-fork { fill: none; stroke: #5a94e4; stroke-width: 3; }
.zoom-bg { fill: #fff; }
.zoom-sep { stroke: #e6e6e6; stroke-width: 1; }
.zoom-ic { fill: none; stroke: #666; stroke-width: 2.500; }
.sat-f { fill: #e4e4e4; }
.sat { fill: #8e8e8e; }
.sat-d { fill: #3e3e3e; }
.sat-l { fill: none; stroke: #6a6a6a; stroke-width: 1.500; }
.foot { fill: rgba(245, 245, 247, .75); }
.foot-t text { font-size: 9.500px; fill: #444; }
```
